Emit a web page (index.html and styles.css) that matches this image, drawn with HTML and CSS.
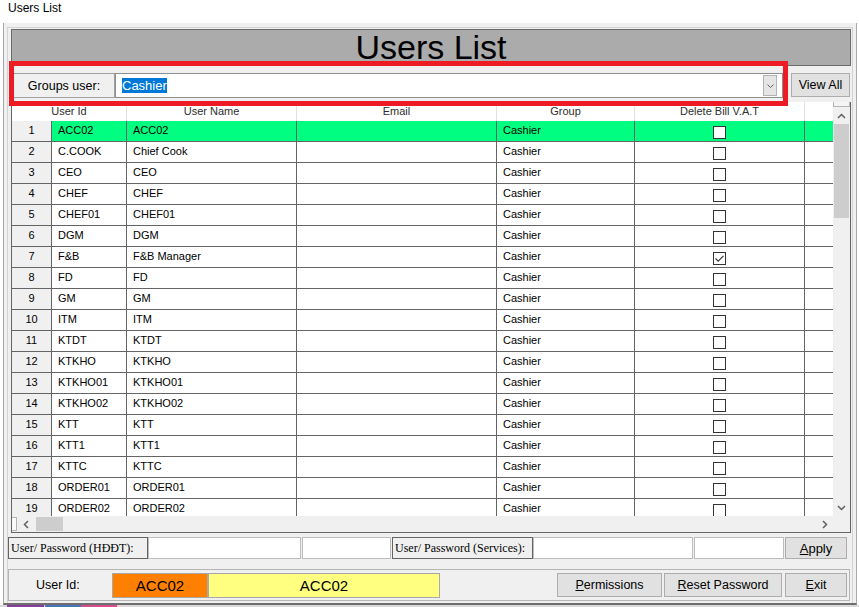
FILE: index.html
```html
<!DOCTYPE html>
<html>
<head>
<meta charset="utf-8">
<title>Users List</title>
<link rel="stylesheet" href="styles.css">
</head>
<body>
<div class="titlebar">Users List</div>
<div class="window">
  <div class="frame">
    <div class="header">Users List</div>
    <div class="toolbar">
      <div class="group-label">Groups user:</div>
      <div class="combo">
        <span class="sel">Cashier</span>
        <span class="drop"><svg width="7" height="4" viewBox="0 0 7 4"><path d="M0.5 0.5 L3.5 3.5 L6.5 0.5" fill="none" stroke="#606060" stroke-width="1"/></svg></span>
      </div>
      <button class="btn viewall">View All</button>
    </div>
    <div class="grid">
      <div class="grid-main">
        <div class="grid-view">
          <table>
            <colgroup>
              <col class="c-rh"><col class="c-id"><col class="c-name"><col class="c-mail"><col class="c-grp"><col class="c-del"><col class="c-last">
            </colgroup>
            <thead>
              <tr><th colspan="2">User Id</th><th>User Name</th><th>Email</th><th>Group</th><th>Delete Bill V.A.T</th><th class="last"></th></tr>
            </thead>
            <tbody>
              <tr class="sel-row"><td class="rh">1</td><td>ACC02</td><td>ACC02</td><td></td><td>Cashier</td><td class="chk"><span class="cb"></span></td><td class="last"></td></tr>
              <tr><td class="rh">2</td><td>C.COOK</td><td>Chief Cook</td><td></td><td>Cashier</td><td class="chk"><span class="cb"></span></td><td class="last"></td></tr>
              <tr><td class="rh">3</td><td>CEO</td><td>CEO</td><td></td><td>Cashier</td><td class="chk"><span class="cb"></span></td><td class="last"></td></tr>
              <tr><td class="rh">4</td><td>CHEF</td><td>CHEF</td><td></td><td>Cashier</td><td class="chk"><span class="cb"></span></td><td class="last"></td></tr>
              <tr><td class="rh">5</td><td>CHEF01</td><td>CHEF01</td><td></td><td>Cashier</td><td class="chk"><span class="cb"></span></td><td class="last"></td></tr>
              <tr><td class="rh">6</td><td>DGM</td><td>DGM</td><td></td><td>Cashier</td><td class="chk"><span class="cb"></span></td><td class="last"></td></tr>
              <tr><td class="rh">7</td><td>F&amp;B</td><td>F&amp;B Manager</td><td></td><td>Cashier</td><td class="chk"><span class="cb"><svg width="11" height="11" viewBox="0 0 11 11"><path d="M1.5 5.5 L4.2 8.2 L9.5 2.8" fill="none" stroke="#333" stroke-width="1.1"/></svg></span></td><td class="last"></td></tr>
              <tr><td class="rh">8</td><td>FD</td><td>FD</td><td></td><td>Cashier</td><td class="chk"><span class="cb"></span></td><td class="last"></td></tr>
              <tr><td class="rh">9</td><td>GM</td><td>GM</td><td></td><td>Cashier</td><td class="chk"><span class="cb"></span></td><td class="last"></td></tr>
              <tr><td class="rh">10</td><td>ITM</td><td>ITM</td><td></td><td>Cashier</td><td class="chk"><span class="cb"></span></td><td class="last"></td></tr>
              <tr><td class="rh">11</td><td>KTDT</td><td>KTDT</td><td></td><td>Cashier</td><td class="chk"><span class="cb"></span></td><td class="last"></td></tr>
              <tr><td class="rh">12</td><td>KTKHO</td><td>KTKHO</td><td></td><td>Cashier</td><td class="chk"><span class="cb"></span></td><td class="last"></td></tr>
              <tr><td class="rh">13</td><td>KTKHO01</td><td>KTKHO01</td><td></td><td>Cashier</td><td class="chk"><span class="cb"></span></td><td class="last"></td></tr>
              <tr><td class="rh">14</td><td>KTKHO02</td><td>KTKHO02</td><td></td><td>Cashier</td><td class="chk"><span class="cb"></span></td><td class="last"></td></tr>
              <tr><td class="rh">15</td><td>KTT</td><td>KTT</td><td></td><td>Cashier</td><td class="chk"><span class="cb"></span></td><td class="last"></td></tr>
              <tr><td class="rh">16</td><td>KTT1</td><td>KTT1</td><td></td><td>Cashier</td><td class="chk"><span class="cb"></span></td><td class="last"></td></tr>
              <tr><td class="rh">17</td><td>KTTC</td><td>KTTC</td><td></td><td>Cashier</td><td class="chk"><span class="cb"></span></td><td class="last"></td></tr>
              <tr><td class="rh">18</td><td>ORDER01</td><td>ORDER01</td><td></td><td>Cashier</td><td class="chk"><span class="cb"></span></td><td class="last"></td></tr>
              <tr><td class="rh">19</td><td>ORDER02</td><td>ORDER02</td><td></td><td>Cashier</td><td class="chk"><span class="cb"></span></td><td class="last"></td></tr>
            </tbody>
          </table>
        </div>
        <div class="vscroll">
          <div class="vs-cap"></div>
          <div class="sb-btn v"><svg width="9" height="6" viewBox="0 0 9 6"><path d="M1 5 L4.5 1.5 L8 5" fill="none" stroke="#606060" stroke-width="1.5"/></svg></div>
          <div class="vs-track"><div class="vs-thumb"></div></div>
          <div class="sb-btn v"><svg width="9" height="6" viewBox="0 0 9 6"><path d="M1 1 L4.5 4.5 L8 1" fill="none" stroke="#606060" stroke-width="1.5"/></svg></div>
        </div>
      </div>
      <div class="hscroll">
        <div class="hs-cap"></div>
        <div class="sb-btn h"><svg width="6" height="9" viewBox="0 0 6 9"><path d="M5 1 L1.5 4.5 L5 8" fill="none" stroke="#606060" stroke-width="1.5"/></svg></div>
        <div class="hs-track"><div class="hs-thumb"></div></div>
        <div class="sb-btn h"><svg width="6" height="9" viewBox="0 0 6 9"><path d="M1 1 L4.5 4.5 L1 8" fill="none" stroke="#606060" stroke-width="1.5"/></svg></div>
        <div class="hs-corner"></div>
      </div>
    </div>
    <div class="pwrow">
      <div class="plbl w140">User/ Password (HĐĐT):</div>
      <div class="pinp w153"></div>
      <div class="pinp w89 ml1"></div>
      <div class="plbl w141 ml1">User/ Password (Services):</div>
      <div class="pinp w160"></div>
      <div class="pinp w90 ml1"></div>
      <button class="btn apply ml1"><span><u>A</u>pply</span></button>
    </div>
    <div class="footer">
      <div class="uid-label">User Id:</div>
      <div class="uid-box uid-code">ACC02</div>
      <div class="uid-box uid-name">ACC02</div>
      <button class="btn fbtn perm"><span><u>P</u>ermissions</span></button>
      <button class="btn fbtn reset"><span><u>R</u>eset Password</span></button>
      <button class="btn fbtn exit"><span><u>E</u>xit</span></button>
    </div>
  </div>
</div>
<div class="taskstrip">
  <span class="ts ts-purple"></span><span class="ts ts-blue"></span><span class="ts ts-pink"></span>
</div>
<div class="annot"></div>
</body>
</html>
```
FILE: styles.css
```css
* { box-sizing: border-box; }
html, body { margin: 0; padding: 0; }
body {
  width: 859px;
  height: 607px;
  overflow: hidden;
  background: #fff;
  font-family: "Liberation Sans", Arial, sans-serif;
  color: #000;
  position: relative;
}
.titlebar {
  height: 23px;
  padding-left: 8px;
  font-size: 12px;
  line-height: 17px;
}
.window {
  margin-left: 3px;
  width: 854px;
  height: 582px;
  background: #f0f0f0;
  border-left: 1px solid #a9a9a9;
  border-right: 1px solid #a9a9a9;
  border-bottom: 2px solid #6e6e6e;
  padding-top: 4px;
}
.frame {
  margin: 0 3px;
  height: 576px;
  border: 1px solid #d3d3d3;
  border-bottom: none;
  overflow: hidden;
}
.header {
  margin: 1px 0 0 3px;
  width: 840px;
  height: 37px;
  border: 1px solid #6b6b6b;
  background: #ababab;
  text-align: center;
  font-size: 34px;
  line-height: 35px;
}
.toolbar {
  display: flex;
  align-items: flex-start;
  height: 36px;
  padding: 7px 0 0 5px;
}
.group-label {
  width: 102px;
  height: 25px;
  border: 1px solid #a0a0a0;
  display: flex;
  align-items: center;
  justify-content: center;
  font-size: 12.5px;
}
.combo {
  width: 668px;
  height: 25px;
  border: 1px solid #8f8f8f;
  background: #fff;
  display: flex;
  align-items: center;
  padding-left: 6px;
  font-size: 13px;
}
.combo .sel {
  background: #0078d7;
  color: #fff;
  line-height: 15px;
}
.combo .drop {
  margin-left: auto;
  margin-right: 5px;
  width: 14px;
  height: 21px;
  background: #e5e5e5;
  border: 1px solid #b3b3b3;
  display: flex;
  align-items: center;
  justify-content: center;
}
.btn {
  background: #e1e1e1;
  border: 1px solid #adadad;
  font-family: inherit;
  font-size: 12.5px;
  color: #000;
  padding: 0;
  margin: 0;
  display: flex;
  align-items: center;
  justify-content: center;
}
.viewall {
  margin-left: 8px;
  width: 59px;
  height: 24px;
}
.grid {
  margin-left: 3px;
  width: 840px;
  height: 431px;
  border: 1px solid #646464;
  border-top: none;
  display: flex;
  flex-direction: column;
  background: #fff;
}
.grid-main {
  display: flex;
  height: 414px;
}
.grid-view {
  width: 821px;
  height: 414px;
  overflow: hidden;
}
table {
  border-collapse: separate;
  border-spacing: 0;
  table-layout: fixed;
  width: 821px;
  font-size: 11px;
}
.c-rh { width: 40px; }
.c-id { width: 75px; }
.c-name { width: 170px; }
.c-mail { width: 200px; }
.c-grp { width: 138px; }
.c-del { width: 170px; }
.c-last { width: 28px; }
thead tr { height: 19px; }
th {
  font-weight: normal;
  color: #2e2e2e;
  padding: 0 0 2px 0;
  border-right: 1px solid #e2e2e2;
  text-align: center;
  white-space: nowrap;
  overflow: hidden;
}
th.last { border-right: none; }
tbody tr { height: 21px; }
td {
  padding: 0 0 2px 6px;
  border-right: 1px solid #646464;
  border-bottom: 1px solid #646464;
  white-space: nowrap;
  overflow: hidden;
  line-height: 16px;
  vertical-align: middle;
}
td.rh {
  background: #f0f0f0;
  text-align: center;
  padding-left: 0;
}
td.last { border-right: none; }
td.chk {
  text-align: center;
  padding: 0;
}
.sel-row td:not(.rh) { background: #00ff80; }
.cb {
  display: inline-block;
  width: 13px;
  height: 13px;
  border: 1px solid #333;
  background: #fff;
  vertical-align: middle;
  line-height: 0;
}
.vscroll {
  width: 17px;
  display: flex;
  flex-direction: column;
  background: #f0f0f0;
}
.vs-cap {
  height: 5px;
  border: 1px solid #b4b4b4;
  border-top: none;
  background: #f4f4f4;
}
.sb-btn {
  display: flex;
  align-items: center;
  justify-content: center;
  flex: none;
}
.sb-btn.v { height: 17px; }
.sb-btn.h { width: 17px; }
.vs-track {
  flex: 1;
}
.vs-thumb {
  margin: 0 1px 0 1px;
  height: 94px;
  background: #cdcdcd;
}
.hscroll {
  height: 16px;
  display: flex;
  background: #f0f0f0;
}
.hs-cap {
  width: 5px;
  border: 1px solid #b4b4b4;
  border-left: none;
  background: #fafafa;
  margin: 1px 0 1px 0;
}
.hs-track {
  flex: 1;
  padding: 1px 0 1px 2px;
}
.hs-thumb {
  width: 27px;
  height: 14px;
  background: #cdcdcd;
}
.hs-corner {
  width: 17px;
  background: #f0f0f0;
}
.pwrow {
  margin-top: 4px;
  height: 22px;
  display: flex;
}
.plbl {
  height: 22px;
  border: 1px solid #646464;
  background: #f0f0f0;
  font-family: "Liberation Serif", "Times New Roman", serif;
  font-size: 12px;
  line-height: 20px;
  padding-left: 2px;
  white-space: nowrap;
}
.pinp {
  height: 22px;
  border: 1px solid #bcbcbc;
  background: #fff;
}
.w140 { width: 140px; }
.w141 { width: 141px; }
.w153 { width: 153px; }
.w89 { width: 89px; }
.w160 { width: 160px; }
.w90 { width: 90px; }
.ml1 { margin-left: 1px; }
.apply {
  width: 62px;
  height: 22px;
  font-size: 13px;
}
.footer {
  margin-top: 10px;
  width: 842px;
  height: 32px;
  border: 1px solid #b5b5b5;
  display: flex;
  align-items: center;
  padding-right: 2px;
}
.uid-label {
  width: 103px;
  padding-left: 27px;
  font-size: 12.5px;
}
.uid-box {
  height: 25px;
  border: 1px solid #a8a8a8;
  font-size: 15px;
  display: flex;
  align-items: center;
  justify-content: center;
}
.uid-code { width: 96px; background: #ff8000; }
.uid-name { width: 232px; background: #ffff80; }
.fbtn { height: 24px; }
.perm { margin-left: auto; width: 105px; }
.reset { margin-left: 2px; width: 118px; }
.exit { margin-left: 3px; width: 62px; }
.taskstrip {
  height: 2px;
  display: flex;
  padding-left: 7px;
  background: #d9d9d9;
}
.ts { display: block; height: 2px; }
.ts-purple { width: 37px; background: #8a3c9c; }
.ts-blue { width: 36px; margin-left: 1px; background: #4a74b8; }
.ts-pink { width: 36px; background: #d84a8c; }
.annot {
  position: absolute;
  left: 9px;
  top: 61px;
  width: 779px;
  height: 45px;
  border: 5px solid #ed1c24;
}
```
